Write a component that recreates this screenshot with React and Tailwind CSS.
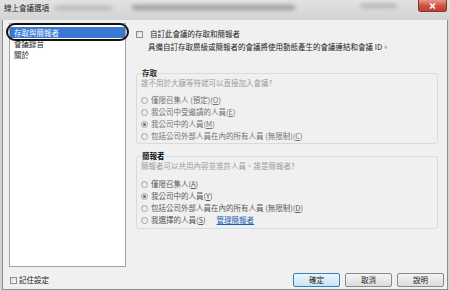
import React from "react";

function Check({ className = "" }) {
  return (
    <span
      className={
        "inline-block w-[7px] h-[7px] border border-[#8e8f8f] bg-gradient-to-br from-[#dcdcdc] to-[#fbfbfb] shrink-0 " +
        className
      }
    />
  );
}

function Radio({ checked }) {
  return (
    <span className="relative inline-flex items-center justify-center w-[7px] h-[7px] rounded-full border border-[#a5a5a5] bg-gradient-to-br from-[#dedede] to-[#fafafa] shrink-0">
      {checked && <span className="w-[3px] h-[3px] rounded-full bg-[#6a6a6a]" />}
    </span>
  );
}

function Row({ checked, children, color }) {
  return (
    <div className={"flex items-center h-[12px] " + color}>
      <Radio checked={checked} />
      <span className="ml-[3px] whitespace-nowrap">{children}</span>
    </div>
  );
}

function Btn({ children, def }) {
  return (
    <div
      className={
        "w-[47px] h-[14px] rounded-[2px] flex items-center justify-center text-[#222] " +
        (def
          ? "border border-[#3c7fb1] bg-gradient-to-b from-[#eaf6fd] to-[#c9e3f3]"
          : "border border-[#8a8a8a] bg-gradient-to-b from-[#f4f4f4] to-[#dcdcdc]")
      }
    >
      {children}
    </div>
  );
}

export default function App() {
  return (
    <div className="w-[450px] h-[291px] flex flex-col bg-[#d4d4d4] overflow-hidden font-['Noto_Sans_CJK_TC','Noto_Sans',sans-serif] text-[7.5px] leading-none">
      {/* Title bar */}
      <div className="h-[20px] shrink-0 flex items-start bg-gradient-to-b from-[#e2e2e2] to-[#d3d3d3]">
        <span className="ml-[4px] mt-[4px] text-[#1e1e1e] whitespace-nowrap">線上會議選項</span>
        <span className="ml-[6px] mt-[6px] w-[57px] h-[4px] bg-[#b5b5b5] blur-[2px] rounded" />
        <span className="ml-[20px] mt-[5px] w-[163px] h-[5px] bg-[#9c9c9c] blur-[2px] rounded" />
        <span className="ml-[65px] mt-[4px] w-[37px] h-[4px] bg-[#b0b0b0] blur-[2px] rounded" />
        <div className="ml-auto mr-[3px] w-[29px] h-[12px] rounded-b-[3px] border border-t-0 border-[#7e3a30] bg-gradient-to-b from-[#e4998d] via-[#cf5444] to-[#c23d2c] flex items-center justify-center">
          <svg width="7" height="6" viewBox="0 0 7 6">
            <path d="M1 0.5 L6 5.5 M6 0.5 L1 5.5" stroke="#ffffff" strokeWidth="1.6" />
          </svg>
        </div>
      </div>

      {/* Body */}
      <div className="flex-1 mx-[2px] mb-[1px] border border-t-0 border-[#8e8e8e] bg-[#f0f0f0] flex flex-col">
        <div className="flex-1 flex pt-[3px] pl-[6px] pr-[9px]">
          {/* List */}
          <div className="relative w-[117px] h-[244px] bg-white border border-[#a3a3a3] pt-[3px] text-[#1a1a1a]">
            <div className="h-[11px] bg-[#3a78d4] text-white flex items-center pl-[4px]">存取與簡報者</div>
            <div className="h-[11px] flex items-center pl-[4px]">會議錄音</div>
            <div className="h-[11px] flex items-center pl-[4px]">關於</div>
            <div className="absolute left-[-4px] top-[-1px] w-[123px] h-[18px] rounded-[9px] border-2 border-[#111]" />
          </div>

          {/* Right panel */}
          <div className="flex-1 ml-[10px] flex flex-col">
            <div className="mt-[6px] h-[10px] flex items-center text-[#222]">
              <Check />
              <span className="ml-[7px]">自訂此會議的存取和簡報者</span>
            </div>
            <div className="mt-[3px] h-[10px] flex items-center pl-[12px] text-[#222] whitespace-nowrap">
              具備自訂存取層級或簡報者的會議將使用動態產生的會議連結和會議 ID。
            </div>

            <fieldset className="mt-[16px] border border-[#d3dce4] rounded-[3px] pl-[4px] pb-[1px]">
              <legend className="px-[1px] h-[10px] leading-[10px] text-[#333] font-semibold">存取</legend>
              <div className="h-[10px] flex items-center text-[#9d9d9d]">誰不用於大廳等待就可以直接加入會議?</div>
              <div className="mt-[6px]">
                <Row color="text-[#727272]">
                  僅限召集人 (預定)(<span className="underline">O</span>)
                </Row>
                <Row color="text-[#727272]">
                  我公司中受邀請的人員(<span className="underline">E</span>)
                </Row>
                <Row color="text-[#727272]" checked>
                  我公司中的人員(<span className="underline">M</span>)
                </Row>
                <Row color="text-[#727272]">
                  包括公司外部人員在內的所有人員 (無限制)(<span className="underline">C</span>)
                </Row>
              </div>
            </fieldset>

            <fieldset className="mt-[7px] border border-[#d3dce4] rounded-[3px] pl-[4px] pb-[2px]">
              <legend className="px-[1px] h-[10px] leading-[10px] text-[#111] font-bold">簡報者</legend>
              <div className="h-[10px] flex items-center text-[#9d9d9d]">簡報者可以共用內容並准許人員。誰是簡報者?</div>
              <div className="mt-[7px]">
                <Row color="text-[#595959]">
                  僅限召集人(<span className="underline">A</span>)
                </Row>
                <Row color="text-[#595959]" checked>
                  我公司中的人員(<span className="underline">Y</span>)
                </Row>
                <Row color="text-[#595959]">
                  包括公司外部人員在內的所有人員 (無限制)(<span className="underline">D</span>)
                </Row>
                <div className="flex items-center h-[12px] text-[#595959]">
                  <Radio />
                  <span className="ml-[3px] whitespace-nowrap">
                    我選擇的人員(<span className="underline">S</span>)
                  </span>
                  <span className="ml-[11px] text-[#1a5fb4] underline whitespace-nowrap">管理簡報者</span>
                </div>
              </div>
            </fieldset>
          </div>
        </div>

        {/* Bottom row */}
        <div className="h-[22px] shrink-0 flex items-start pt-[6px] pl-[7px] pr-[3px]">
          <div className="mt-[3px] h-[8px] flex items-center text-[#222]">
            <Check />
            <span className="ml-[2px]">記住設定</span>
          </div>
          <div className="ml-auto flex gap-[5px]">
            <Btn def>確定</Btn>
            <Btn>取消</Btn>
            <Btn>說明</Btn>
          </div>
        </div>
      </div>
    </div>
  );
}
